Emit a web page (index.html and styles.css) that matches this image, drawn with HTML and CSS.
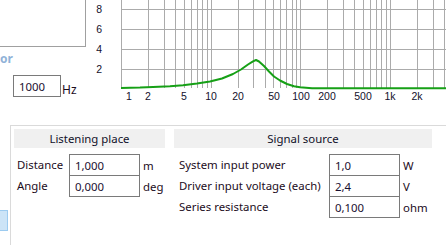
FILE: index.html
```html
<!DOCTYPE html>
<html>

<head>
    <link rel="stylesheet" href="styles.css">
</head>

<body>
    <div class="top">
        <div class="side">
            <div class="box"></div>
            <div class="group-title">or</div>
            <div class="freq">
                <input class="field" type="text" value="1000">
                <span class="unit">Hz</span>
            </div>
        </div>

        <!-- response chart, drawn in page coordinates -->
        <svg class="chart" width="356" height="110" viewBox="90 0 356 110">
            <path class="grid" d="M121 9.5H446M121 29.5H446M121 49.5H446M121 69.5H446
                M121.5 0V88M148.5 0V88M164.5 0V88M175.5 0V88M184.5 0V88M191.5 0V88M197.5 0V88M202.5 0V88M207.5 0V88
                M211.5 0V88M238.5 0V88M253.5 0V88M265.5 0V88M273.5 0V88M280.5 0V88M286.5 0V88M292.5 0V88M296.5 0V88
                M300.5 0V88M327.5 0V88M343.5 0V88M354.5 0V88M363.5 0V88M370.5 0V88M376.5 0V88M381.5 0V88M386.5 0V88
                M390.5 0V88M417.5 0V88M433.5 0V88M444.5 0V88" />
            <polyline class="curve" points="121,88 140,87.6 153,87 170,86.2 183,85.2 197,83.6 210,81.5 222,78.5 233,74 241,69.5 248,64.5 253,61.3 256,60 259,61.5 264,66 269,71.5 274,76.5 280,80.5 287,84 294,86.2 300,87.3 312,88.2 446,88.3" />
            <g class="ylab">
                <text x="102" y="13">8</text>
                <text x="102" y="33">6</text>
                <text x="102" y="53">4</text>
                <text x="102" y="73">2</text>
            </g>
            <g class="xlab">
                <text x="129" y="100">1</text>
                <text x="148" y="100">2</text>
                <text x="184" y="100">5</text>
                <text x="211" y="100">10</text>
                <text x="238" y="100">20</text>
                <text x="274" y="100">50</text>
                <text x="301" y="100">100</text>
                <text x="327" y="100">200</text>
                <text x="363" y="100">500</text>
                <text x="390" y="100">1k</text>
                <text x="417" y="100">2k</text>
            </g>
        </svg>
    </div>

    <div class="bottom">
        <div class="strip">
            <div class="tab"></div>
        </div>
        <div class="panel">
            <section class="group listen">
                <div class="head">Listening place</div>
                <div class="rows">
                    <span class="label">Distance</span>
                    <input class="field" type="text" value="1,000">
                    <span class="unit">m</span>
                    <span class="label">Angle</span>
                    <input class="field" type="text" value="0,000">
                    <span class="unit">deg</span>
                </div>
            </section>
            <section class="group signal">
                <div class="head">Signal source</div>
                <div class="rows">
                    <span class="label">System input power</span>
                    <input class="field" type="text" value="1,0">
                    <span class="unit">W</span>
                    <span class="label">Driver input voltage (each)</span>
                    <input class="field" type="text" value="2,4">
                    <span class="unit">V</span>
                    <span class="label">Series resistance</span>
                    <input class="field" type="text" value="0,100">
                    <span class="unit">ohm</span>
                </div>
            </section>
        </div>
    </div>
</body>

</html>
```

FILE: styles.css
```css
/* base */
body {
    margin: 0;
    width: 446px;
    height: 245px;
    overflow: hidden;
    background: #fff;
    font-family: "Noto Sans", "Open Sans", sans-serif;
    font-size: 11.4px;
    color: #1c0c1c;
}

/* top area: left controls + chart */
.top {
    display: flex;
    height: 125px;
}

.side {
    width: 90px;
    flex: none;
}

.box {
    width: 86px;
    height: 47px;
    box-sizing: border-box;
    border-right: 1px solid #a0a0a0;
    border-bottom: 1px solid #a0a0a0;
}

.group-title {
    margin-top: 5px;
    height: 14px;
    line-height: 14px;
    font-weight: bold;
    font-size: 12px;
    color: #90b2d8;
}

.freq {
    display: flex;
    margin: 9px 0 0 13px;
}

.freq .field {
    width: 48px;
    height: 22px;
}

.freq .unit {
    align-self: flex-end;
    margin-left: 1px;
    padding-top: 0;
    font-size: 12px;
}

/* text boxes */
.field {
    box-sizing: border-box;
    width: 71px;
    height: 22px;
    margin: 0;
    padding: 0 0 0 5px;
    border: 1px solid #7a7a7a;
    border-radius: 0;
    background: #fff;
    font: inherit;
    color: #1a1030;
    outline: none;
}

.unit {
    line-height: 14px;
}

/* chart */
.chart {
    display: block;
    flex: none;
}

.grid {
    fill: none;
    stroke: #ababab;
    stroke-width: 1;
}

.curve {
    fill: none;
    stroke: #16a016;
    stroke-width: 2;
    stroke-linejoin: round;
}

.chart text {
    font-family: "Liberation Sans", sans-serif;
    font-size: 10.5px;
    fill: #14102c;
}

.ylab text {
    text-anchor: end;
}

.xlab text {
    text-anchor: middle;
}

/* bottom panel */
.bottom {
    display: flex;
    height: 120px;
}

.strip {
    width: 10px;
    flex: none;
}

.tab {
    margin-top: 85px;
    width: 7px;
    height: 19px;
    background: #cce4f7;
    border: 1px solid #9ccbf0;
    border-left: none;
}

.panel {
    flex: 1;
    display: flex;
    gap: 9px;
    padding: 3px 0 0 3px;
    border-top: 1px solid #dadada;
    border-left: 1px solid #dadada;
}

.group {
    flex: none;
}

.listen {
    width: 151px;
}

.signal {
    width: 258px;
}

.head {
    height: 19px;
    line-height: 19px;
    text-align: center;
    background: #f0f0f0;
    color: #10102a;
}

.rows {
    display: grid;
    grid-auto-rows: 21px;
    align-items: center;
    margin-top: 6px;
}

.listen .rows {
    grid-template-columns: 52px 71px auto;
    padding-left: 3px;
}

.signal .rows {
    grid-template-columns: 150px 71px auto;
    padding-left: 5px;
}

.rows .field {
    align-self: start;
}

.rows .unit {
    align-self: start;
    padding: 5px 0 0 3px;
}
```
